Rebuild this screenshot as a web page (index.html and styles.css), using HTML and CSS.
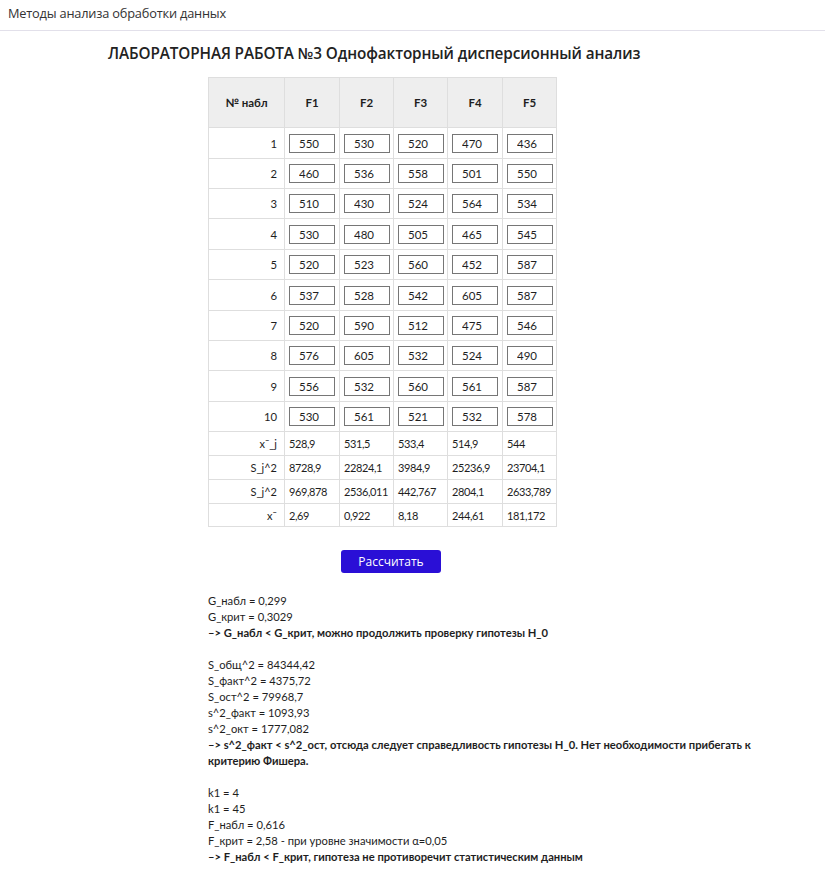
FILE: index.html
```html
<!DOCTYPE html>
<html lang="ru">
<head>
<meta charset="utf-8">
<title>Методы анализа обработки данных</title>
<link rel="stylesheet" href="styles.css">
</head>
<body>
<header class="topbar">Методы анализа обработки данных</header>
<main class="page">
  <h1 class="title">ЛАБОРАТОРНАЯ РАБОТА №3 Однофакторный дисперсионный анализ</h1>
  <table class="grid">
    <colgroup>
      <col class="c0"><col class="c1"><col class="c2"><col class="c3"><col class="c4"><col class="c5">
    </colgroup>
    <thead>
      <tr class="head"><th>№ набл</th><th>F1</th><th>F2</th><th>F3</th><th>F4</th><th>F5</th></tr>
    </thead>
    <tbody>
      <tr class="row r31"><td class="num">1</td><td><input class="cell" value="550"></td><td><input class="cell" value="530"></td><td><input class="cell" value="520"></td><td><input class="cell" value="470"></td><td><input class="cell" value="436"></td></tr>
      <tr class="row"><td class="num">2</td><td><input class="cell" value="460"></td><td><input class="cell" value="536"></td><td><input class="cell" value="558"></td><td><input class="cell" value="501"></td><td><input class="cell" value="550"></td></tr>
      <tr class="row"><td class="num">3</td><td><input class="cell" value="510"></td><td><input class="cell" value="430"></td><td><input class="cell" value="524"></td><td><input class="cell" value="564"></td><td><input class="cell" value="534"></td></tr>
      <tr class="row r31"><td class="num">4</td><td><input class="cell" value="530"></td><td><input class="cell" value="480"></td><td><input class="cell" value="505"></td><td><input class="cell" value="465"></td><td><input class="cell" value="545"></td></tr>
      <tr class="row"><td class="num">5</td><td><input class="cell" value="520"></td><td><input class="cell" value="523"></td><td><input class="cell" value="560"></td><td><input class="cell" value="452"></td><td><input class="cell" value="587"></td></tr>
      <tr class="row r31"><td class="num">6</td><td><input class="cell" value="537"></td><td><input class="cell" value="528"></td><td><input class="cell" value="542"></td><td><input class="cell" value="605"></td><td><input class="cell" value="587"></td></tr>
      <tr class="row"><td class="num">7</td><td><input class="cell" value="520"></td><td><input class="cell" value="590"></td><td><input class="cell" value="512"></td><td><input class="cell" value="475"></td><td><input class="cell" value="546"></td></tr>
      <tr class="row"><td class="num">8</td><td><input class="cell" value="576"></td><td><input class="cell" value="605"></td><td><input class="cell" value="532"></td><td><input class="cell" value="524"></td><td><input class="cell" value="490"></td></tr>
      <tr class="row r31"><td class="num">9</td><td><input class="cell" value="556"></td><td><input class="cell" value="532"></td><td><input class="cell" value="560"></td><td><input class="cell" value="561"></td><td><input class="cell" value="587"></td></tr>
      <tr class="row"><td class="num">10</td><td><input class="cell" value="530"></td><td><input class="cell" value="561"></td><td><input class="cell" value="521"></td><td><input class="cell" value="532"></td><td><input class="cell" value="578"></td></tr>
      <tr class="stat"><td class="num">x¯_j</td><td>528,9</td><td>531,5</td><td>533,4</td><td>514,9</td><td>544</td></tr>
      <tr class="stat"><td class="num">S_j^2</td><td>8728,9</td><td>22824,1</td><td>3984,9</td><td>25236,9</td><td>23704,1</td></tr>
      <tr class="stat"><td class="num">S_j^2</td><td>969,878</td><td>2536,011</td><td>442,767</td><td>2804,1</td><td>2633,789</td></tr>
      <tr class="stat last"><td class="num">x¯</td><td>2,69</td><td>0,922</td><td>8,18</td><td>244,61</td><td>181,172</td></tr>
    </tbody>
  </table>
  <div class="actions"><button class="btn" type="button">Рассчитать</button></div>
  <div class="result">
    <p>G_набл = 0,299</p>
    <p>G_крит = 0,3029</p>
    <p class="b">–&gt; G_набл &lt; G_крит, можно продолжить проверку гипотезы H_0</p>
    <p class="gap"></p>
    <p>S_общ^2 = 84344,42</p>
    <p>S_факт^2 = 4375,72</p>
    <p>S_ост^2 = 79968,7</p>
    <p>s^2_факт = 1093,93</p>
    <p>s^2_окт = 1777,082</p>
    <p class="b">–&gt; s^2_факт &lt; s^2_ост, отсюда следует справедливость гипотезы H_0. Нет необходимости прибегать к критерию Фишера.</p>
    <p class="gap"></p>
    <p>k1 = 4</p>
    <p>k1 = 45</p>
    <p>F_набл = 0,616</p>
    <p>F_крит = 2,58 - при уровне значимости α=0,05</p>
    <p class="b">–&gt; F_набл &lt; F_крит, гипотеза не противоречит статистическим данным</p>
  </div>
</main>
</body>
</html>
```
FILE: styles.css
```css
* { box-sizing: border-box; }
html, body { margin: 0; padding: 0; background: #fff; }
body {
  font-family: Lato, "Open Sans", sans-serif;
  color: #212529;
}
.topbar {
  height: 31px;
  padding: 4px 0 0 8px;
  font-family: "Open Sans", sans-serif;
  font-size: 12.8px;
  letter-spacing: -0.2px;
  color: #333;
  border-bottom: 1px solid #e2e0ea;
}
.page { padding-left: 208px; }
.title {
  margin: 12px 0 0 -100px;
  height: 34px;
  font-family: "Open Sans", sans-serif;
  font-size: 15.3px;
  font-weight: 600;
  letter-spacing: -0.1px;
  color: #222;
}
.grid {
  border-collapse: collapse;
  table-layout: fixed;
  width: 348px;
  font-size: 11.3px;
  color: #1e1e1e;
}
.c0 { width: 76px; }
.c1 { width: 55px; }
.c2 { width: 54px; }
.c3 { width: 54px; }
.c4 { width: 55px; }
.c5 { width: 54px; }
.grid th, .grid td {
  border: 1px solid #dedede;
  padding: 0 4px;
  white-space: nowrap;
}
.head { height: 50px; background: #eeeeee; }
.head th { font-weight: 700; text-align: center; font-size: 11.5px; }
.row { height: 30px; }
.row.r31 { height: 31px; }
.num { text-align: right; padding-right: 7px !important; }
.cell {
  display: block;
  width: 46px;
  height: 19px;
  margin: 0;
  padding: 0 0 0 9px;
  border: 1px solid #767676;
  border-radius: 0;
  font: inherit;
  font-size: 11.5px;
  color: #1e1e1e;
  background: #fff;
}
.stat { height: 24px; font-size: 11px; letter-spacing: -0.4px; }
.stat .num { letter-spacing: 0; }
.stat.last { height: 23px; }
.actions { padding: 23px 0 0 133px; }
.btn {
  width: 100px;
  height: 23px;
  border: 0;
  border-radius: 3px;
  background: #2a0fd6;
  color: #fff;
  font-family: "Open Sans", sans-serif;
  font-size: 12px;
  padding: 0;
  cursor: pointer;
}
.result {
  margin-top: 20px;
  width: 560px;
  font-size: 11.2px;
  line-height: 16px;
  color: #1e1e1e;
}
.result p { margin: 0; }
.result .b { font-weight: 700; }
.result .gap { height: 16px; }
```
